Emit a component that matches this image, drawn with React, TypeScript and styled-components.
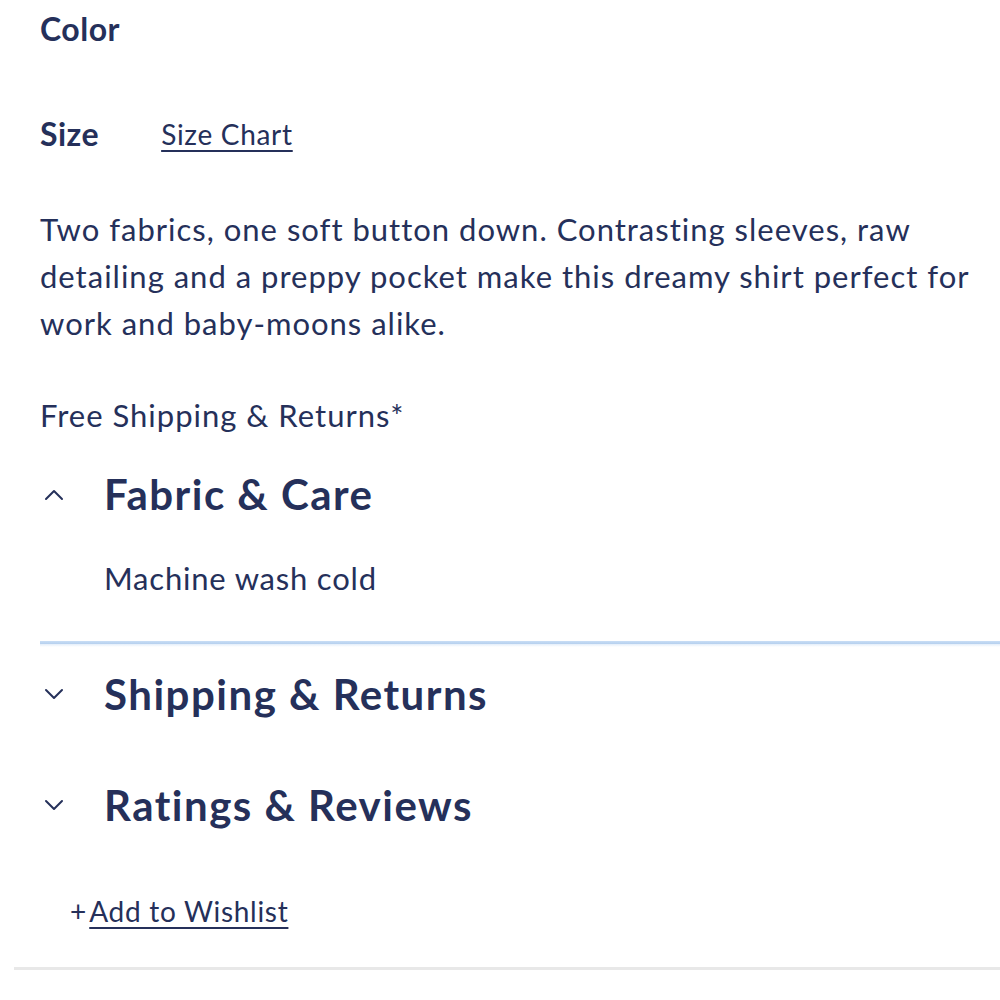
import React from "react";
import styled, { createGlobalStyle } from "styled-components";

const navy = "#25305a";

const GlobalStyle = createGlobalStyle`
  body {
    margin: 0;
    background: #ffffff;
    font-family: Lato, "Open Sans", sans-serif;
    color: ${navy};
  }
`;

interface ISection {
  title: string;
  open: boolean;
  body?: string;
}

const sections: ISection[] = [
  { title: "Fabric & Care", open: true, body: "Machine wash cold" },
  { title: "Shipping & Returns", open: false },
  { title: "Ratings & Reviews", open: false },
];

const Chevron: React.FC<{ up: boolean }> = ({ up }) => (
  <ChevronBox viewBox="0 0 22 13">
    <polyline
      points={up ? "3,11 11,3 19,11" : "3,2 11,10 19,2"}
      fill="none"
      stroke={navy}
      strokeWidth="2"
      strokeLinecap="round"
      strokeLinejoin="round"
    />
  </ChevronBox>
);

const App: React.FC = () => {
  return (
    <Page>
      <GlobalStyle />
      <Label>Color</Label>
      <SizeRow>
        <Label>Size</Label>
        <TextLink href="#">Size Chart</TextLink>
      </SizeRow>
      <Description>
        Two fabrics, one soft button down. Contrasting sleeves, raw detailing
        and a preppy pocket make this dreamy shirt perfect for work and
        baby-moons alike.
      </Description>
      <Shipping>Free Shipping &amp; Returns*</Shipping>

      {sections.map(({ title, open, body }, i) => (
        <Section key={i} open={open}>
          <SectionHeader>
            <Chevron up={open} />
            <SectionTitle>{title}</SectionTitle>
          </SectionHeader>
          {open && body && <SectionBody>{body}</SectionBody>}
        </Section>
      ))}

      <Footer>
        <Wishlist>
          <Plus>+</Plus>
          <TextLink href="#">Add to Wishlist</TextLink>
        </Wishlist>
      </Footer>
    </Page>
  );
};

const Page = styled.div`
  padding: 0 20px 40px 40px;
  display: flex;
  flex-direction: column;
`;

const Label = styled.div`
  font-size: 32px;
  font-weight: 700;
  letter-spacing: 0.5px;
  line-height: 58px;
`;

const SizeRow = styled.div`
  display: flex;
  align-items: center;
  gap: 62px;
  margin-top: 51px;
  height: 50px;
`;

const TextLink = styled.a`
  color: ${navy};
  font-size: 28px;
  letter-spacing: 0.7px;
  text-decoration: underline;
  text-decoration-thickness: 2px;
  text-underline-offset: 5px;
`;

const Description = styled.p`
  margin: 47px 0 0;
  font-size: 31px;
  letter-spacing: 1px;
  line-height: 47px;
`;

const Shipping = styled.p`
  margin: 45px 0 0;
  font-size: 31px;
  letter-spacing: 1px;
  line-height: 47px;
`;

const Section = styled.div<{ open: boolean }>`
  position: relative;
  margin-top: ${({ open }) => (open ? "25px" : "20px")};
  padding-bottom: ${({ open }) => (open ? "39px" : "31px")};
  margin-right: -20px;
  ${({ open }) =>
    open &&
    `
    border-bottom: 3px solid #a3c3e6;
    &::after {
      content: "";
      position: absolute;
      left: 0;
      right: 0;
      top: 100%;
      height: 6px;
      background: linear-gradient(#c8ddf5, rgba(232, 242, 253, 0));
    }
  `}
`;

const SectionHeader = styled.div`
  display: flex;
  align-items: center;
  height: 60px;
`;

const ChevronBox = styled.svg`
  width: 22px;
  height: 13px;
  margin-left: 3px;
  margin-right: 39px;
  flex-shrink: 0;
`;

const SectionTitle = styled.h2`
  margin: 0;
  font-size: 42px;
  font-weight: 700;
  letter-spacing: 1.5px;
  line-height: 60px;
`;

const SectionBody = styled.div`
  margin: 31px 0 0 64px;
  font-size: 31px;
  letter-spacing: 0.8px;
  line-height: 47px;
`;

const Footer = styled.div`
  margin: 25px -20px 0 -26px;
  padding: 0 0 36px 56px;
  border-bottom: 3px solid #e8e8e8;
`;

const Wishlist = styled.div`
  display: flex;
  align-items: center;
  height: 40px;
`;

const Plus = styled.span`
  font-size: 28px;
  margin-right: 3px;
`;

export default App;
